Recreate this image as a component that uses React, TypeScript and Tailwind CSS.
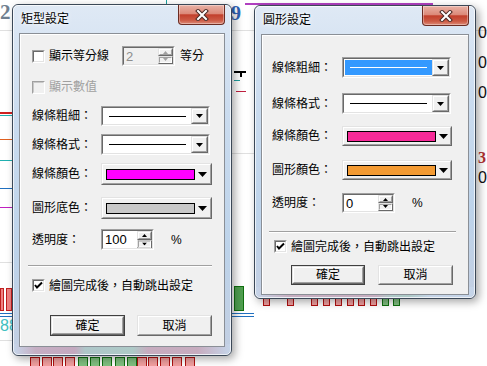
import React from "react";

const FONT = "font-['Liberation_Sans','Noto_Sans_CJK_TC',sans-serif]";

function Sunken({ className = "", inner = "", children }: { className?: string; inner?: string; children?: React.ReactNode }) {
  return (
    <div className={`border border-t-[#a0a0a0] border-l-[#a0a0a0] border-b-white border-r-white ${className}`}>
      <div className={`h-full w-full border border-t-[#696969] border-l-[#696969] border-b-[#e3e3e3] border-r-[#e3e3e3] ${inner}`}>{children}</div>
    </div>
  );
}

function Raised({ className = "", inner = "", children }: { className?: string; inner?: string; children?: React.ReactNode }) {
  return (
    <div className={`border border-t-[#e3e3e3] border-l-[#e3e3e3] border-b-[#696969] border-r-[#696969] ${className}`}>
      <div className={`h-full w-full border border-t-white border-l-white border-b-[#a0a0a0] border-r-[#a0a0a0] bg-[#f0f0f0] ${inner}`}>{children}</div>
    </div>
  );
}

function Tri({ w = 7, h = 4 }: { w?: number; h?: number }) {
  return (
    <svg width={w} height={h} viewBox={`0 0 ${w} ${h}`}>
      <polygon points={`0,0 ${w},0 ${w / 2},${h}`} fill="#000" />
    </svg>
  );
}

function TriUp({ w = 5, h = 3, color = "#000" }: { w?: number; h?: number; color?: string }) {
  return (
    <svg width={w} height={h} viewBox={`0 0 ${w} ${h}`}>
      <polygon points={`0,${h} ${w},${h} ${w / 2},0`} fill={color} />
    </svg>
  );
}

function Checkbox({ checked = false, disabled = false }: { checked?: boolean; disabled?: boolean }) {
  return (
    <div className="w-[13px] h-[13px] shrink-0 border border-t-[#a0a0a0] border-l-[#a0a0a0] border-b-white border-r-white">
      <div
        className={`w-full h-full border ${
          disabled
            ? "border-t-[#c8c8c8] border-l-[#c8c8c8] border-b-[#f0f0f0] border-r-[#f0f0f0] bg-[#f0f0f0]"
            : "border-t-[#696969] border-l-[#696969] border-b-[#e3e3e3] border-r-[#e3e3e3] bg-white"
        } flex items-center justify-center`}
      >
        {checked && (
          <svg width="9" height="9" viewBox="0 0 9 9">
            <polyline points="1,4 3,6.5 8,1.5" fill="none" stroke="#000" strokeWidth="2" />
          </svg>
        )}
      </div>
    </div>
  );
}

function Spin({ value, disabled = false, w = 53, h = 21 }: { value: string; disabled?: boolean; w?: number; h?: number }) {
  return (
    <Sunken className={`shrink-0`} inner={`flex ${disabled ? "bg-[#f0f0f0]" : "bg-white"}`}>
      <div style={{ width: w - 4, height: h - 4 }} className="flex">
        <div className={`flex-1 pl-[2px] leading-[17px] text-[13px] ${disabled ? "text-[#8d8d8d]" : "text-black"} font-['Liberation_Sans',sans-serif]`}>{value}</div>
        <div className="w-[15px] flex flex-col">
          <Raised className="flex-1" inner="flex items-center justify-center">
            <TriUp color={disabled ? "#a0a0a0" : "#000"} />
          </Raised>
          <Raised className="flex-1" inner="flex items-center justify-center rotate-180">
            <TriUp color={disabled ? "#a0a0a0" : "#000"} />
          </Raised>
        </div>
      </div>
    </Sunken>
  );
}

function LineCombo({ selected = false, w = 109, h = 20 }: { selected?: boolean; w?: number; h?: number }) {
  return (
    <Sunken inner="flex bg-white">
      <div style={{ width: w - 4, height: h - 4 }} className="flex">
        <div className={`flex-1 flex items-center ${selected ? "bg-[#3399ff]" : ""} px-[5px] my-[1px] ml-[1px]`}>
          <div className={`h-[1px] w-full ${selected ? "bg-white" : "bg-black"}`} />
        </div>
        <Raised className="w-[17px]" inner="flex items-center justify-center">
          <Tri />
        </Raised>
      </div>
    </Sunken>
  );
}

function ColorCombo({ color, w = 111, h = 22 }: { color: string; w?: number; h?: number }) {
  return (
    <Raised>
      <div style={{ width: w - 4, height: h - 4 }} className="flex items-center">
        <div className="ml-[3px] h-[11px] w-[89px] border border-black" style={{ background: color }} />
        <div className="ml-[3px]">
          <Tri w={9} h={5} />
        </div>
      </div>
    </Raised>
  );
}

function Button({ label, def = false, w = 75, h = 21 }: { label: string; def?: boolean; w?: number; h?: number }) {
  return (
    <div className={`${def ? "border border-[#404040]" : ""}`}>
      <Raised>
        <div style={{ width: w - (def ? 6 : 4), height: h - (def ? 6 : 4) }} className="flex items-center justify-center text-[12px] leading-none">
          {label}
        </div>
      </Raised>
    </div>
  );
}

function CloseBtn() {
  return (
    <div className="absolute right-[6px] top-0 w-[47px] h-[20px] rounded-b-[4px] border border-t-0 border-[#6b2c22] bg-[linear-gradient(180deg,#e9b2a6_0%,#dc8a79_45%,#c2402c_52%,#cc5a44_80%,#dc8b78_100%)] flex items-center justify-center shadow-[inset_0_0_0_1px_rgba(255,255,255,0.35)]">
      <svg width="14" height="12" viewBox="0 0 14 12">
        <path d="M3 2 L11 10 M11 2 L3 10" stroke="#4a2a25" strokeWidth="4" strokeLinecap="square" />
        <path d="M3 2 L11 10 M11 2 L3 10" stroke="#fff" strokeWidth="2" strokeLinecap="square" />
      </svg>
    </div>
  );
}

function Frame({
  title,
  w,
  h,
  children,
  clientH,
  bottomTint,
}: {
  title: string;
  w: number;
  h: number;
  clientH: number;
  children: React.ReactNode;
  bottomTint?: string;
}) {
  return (
    <div
      style={{ width: w, height: h }}
      className="relative flex flex-col rounded-[6px] border border-[#3b4857] bg-[linear-gradient(180deg,#dfe9f5_0%,#cbdcef_30%,#bdd3ea_70%,#c3cfe2_100%)] shadow-[3px_3px_8px_rgba(0,0,0,0.35)]"
    >
      {bottomTint && (
        <div className="absolute left-[1px] right-[1px] bottom-[1px] h-[10px] rounded-b-[5px] opacity-80" style={{ background: bottomTint }} />
      )}
      <div className="absolute inset-0 rounded-[5px] border border-white/70 pointer-events-none" />
      <div className="h-[28px] shrink-0 pl-[8px] flex items-center text-[12px] text-black [text-shadow:0_0_6px_#fff,0_0_3px_#fff]">{title}</div>
      <div style={{ height: clientH }} className="relative mx-[6px] border border-[#8a8f96] bg-[#f0f0f0] shadow-[inset_1px_1px_0_#fff]">
        {children}
      </div>
      <CloseBtn />
    </div>
  );
}

function Bar({ x, w, c, h = 12 }: { x: number; w: number; c: string; h?: number }) {
  return (
    <div
      style={{ left: x, width: w, height: h }}
      className={`absolute top-0 border ${c === "r" ? "border-[#b01010] bg-[#f2a0a0]" : "border-[#107010] bg-[#80c080]"}`}
    />
  );
}

function Background() {
  const bottomBars: [number, string][] = [
    [30, "r"], [42, "r"], [53, "r"], [65, "r"],
    [78, "g"], [90, "g"], [102, "g"], [115, "g"], [127, "g"],
    [137, "r"], [148, "r"], [160, "r"], [172, "r"], [185, "r"],
  ];
  const rightBars: [number, string][] = [
    [263, "r"], [287, "r"], [311, "r"], [323, "r"], [335, "r"], [347, "r"], [358, "r"], [370, "r"], [382, "g"], [393, "g"],
  ];
  return (
    <div className="absolute inset-0">
      {/* grid lines */}
      <div className="absolute left-0 top-[30px] w-[487px] h-[1px] bg-[#e0e0e0]" />
      <div className="absolute left-0 top-[262px] w-[12px] h-[1px] bg-[#e0e0e0]" />
      <div className="absolute left-0 top-[340px] w-[12px] h-[1px] bg-[#e0e0e0]" />
      <div className="absolute left-[166px] top-0 w-[1px] h-[5px] bg-[#1aa0a0]" />
      <div className="absolute left-[245px] top-[3px] w-[188px] h-[2px] bg-[#b040c0]" />
      {/* top numbers */}
      <div className="absolute left-0 top-[2px] text-[21px] font-bold text-[#6f7f90] font-['Liberation_Serif',serif] leading-none">2</div>
      <div className="absolute left-[231px] top-[3px] text-[20px] font-bold text-[#2f63b5] font-['Liberation_Serif',serif] leading-none">9</div>
      {/* left strip marks */}
      <div className="absolute left-0 top-[112px] w-[12px] h-[2px] bg-[#d02020]" />
      <div className="absolute left-0 top-[115px] w-[12px] h-[1px] bg-[#20b0b0]" />
      <div className="absolute left-0 top-[139px] w-[12px] h-[1px] bg-[#e06020]" />
      <div className="absolute left-0 top-[160px] w-[12px] h-[1px] bg-[#20b0b0]" />
      <div className="absolute left-0 top-[188px] w-[12px] h-[1px] bg-[#2070c0]" />
      <div className="absolute left-0 top-[207px] w-[12px] h-[1px] bg-[#c020c0]" />
      <div className="absolute left-0 top-[288px] w-[4px] h-[23px] border border-[#c02020] bg-[#f08080]" />
      <div className="absolute left-[6px] top-[288px] w-[6px] h-[23px] border border-[#c02020] bg-[#f08080]" />
      <div className="absolute left-0 top-[313px] w-[254px] h-[1px] bg-[#2070c0]" />
      <div className="absolute left-0 top-[316px] w-[254px] h-[1px] bg-[#2070c0]" />
      <div className="absolute left-0 top-[318px] text-[16px] text-[#40c0c0] font-['Liberation_Sans',sans-serif] leading-none">88</div>
      {/* between dialogs */}
      <div className="absolute left-[234px] top-[286px] w-[10px] h-[25px] border border-[#107010] bg-[#50a050]" />
      <div className="absolute left-[234px] top-[71px] w-[12px] h-[2px] bg-[#000]" />
      <div className="absolute left-[240px] top-[71px] w-[2px] h-[6px] bg-[#000]" />
      <div className="absolute left-[234px] top-[80px] w-[6px] h-[1px] bg-[#20a0a0]" />
      <div className="absolute left-[236px] top-[91px] w-[10px] h-[1px] bg-[#c02040]" />
      <div className="absolute left-[232px] top-[153px] w-[22px] h-[1px] bg-[#e0e0e0]" />
      {/* right edge numbers */}
      <div className="absolute left-[478px] top-[25px] flex flex-col gap-[14px] text-[16px] text-[#111] font-['Liberation_Sans',sans-serif] leading-none">
        <span>0</span>
        <span>0</span>
        <span>0</span>
      </div>
      <div className="absolute left-[478px] top-[150px] text-[16px] text-[#b03030] font-bold font-['Liberation_Serif',serif] leading-none">3</div>
      <div className="absolute left-[478px] top-[170px] text-[16px] text-[#111] font-['Liberation_Sans',sans-serif] leading-none">0</div>
      {/* bottom bars */}
      <div className="absolute left-0 top-[357px] w-[487px] h-[12px]">
        {bottomBars.map(([x, c], i) => (
          <Bar key={i} x={x} w={10} c={c} />
        ))}
      </div>
      <div className="absolute left-0 top-[297px] w-[487px] h-[9px]">
        {rightBars.map(([x, c], i) => (
          <Bar key={i} x={x} w={7} c={c} h={9} />
        ))}
      </div>
    </div>
  );
}

function Label({ text, w = 69, gray = false }: { text: string; w?: number; gray?: boolean }) {
  return (
    <div style={{ width: w }} className={`shrink-0 text-[12px] leading-none ${gray ? "text-[#a0a0a0]" : ""}`}>
      {text}
    </div>
  );
}

function Separator({ ml, w }: { ml: number; w: number }) {
  return (
    <div style={{ marginLeft: ml, width: w }} className="h-[2px] border-t border-t-[#a0a0a0] border-b border-b-white" />
  );
}

function LeftDialog() {
  return (
    <Frame
      title="矩型設定"
      w={220}
      h={352}
      clientH={314}
      bottomTint="linear-gradient(90deg,#c6d6ea 0%,#c6a6bb 10%,#c49fb6 28%,#a9c4c2 33%,#a8c8c0 55%,#c8a3b6 62%,#c8a3b6 85%,#c6d6ea 100%)"
    >
      <div className="flex flex-col pl-[12px]">
        <div className="mt-[12px] h-[20px] flex items-center">
          <Checkbox />
          <div className="ml-[4px] w-[73px] text-[12px] leading-none">顯示等分線</div>
          <Spin value="2" disabled h={20} />
          <div className="ml-[5px] text-[12px] leading-none">等分</div>
        </div>
        <div className="mt-[11px] h-[20px] flex items-center">
          <Checkbox disabled />
          <div className="ml-[4px] text-[12px] leading-none text-[#a0a0a0]">顯示數值</div>
        </div>
        <div className="mt-[9px] flex items-center">
          <Label text="線條粗細：" />
          <LineCombo />
        </div>
        <div className="mt-[8px] flex items-center">
          <Label text="線條格式：" />
          <LineCombo h={21} />
        </div>
        <div className="mt-[8px] flex items-center">
          <Label text="線條顏色：" />
          <ColorCombo color="#ff00ff" />
        </div>
        <div className="mt-[12px] flex items-center">
          <Label text="圖形底色：" />
          <ColorCombo color="#c8c8c8" />
        </div>
        <div className="mt-[10px] flex items-center">
          <Label text="透明度：" />
          <Spin value="100" />
          <div className="ml-[17px] text-[12px] leading-none font-['Liberation_Sans',sans-serif]">%</div>
        </div>
        <div className="mt-[15px]">
          <Separator ml={-4} w={184} />
        </div>
        <div className="mt-[12px] h-[13px] flex items-center">
          <Checkbox checked />
          <div className="ml-[4px] text-[12px] leading-none">繪圖完成後，自動跳出設定</div>
        </div>
        <div className="mt-[23px] flex gap-[12px] ml-[18px]">
          <Button label="確定" def />
          <Button label="取消" />
        </div>
      </div>
    </Frame>
  );
}

function RightDialog() {
  return (
    <Frame
      title="圓形設定"
      w={222}
      h={294}
      clientH={261}
      bottomTint="linear-gradient(90deg,#c6d6ea 0%,#c8a6b8 15%,#c8a6b8 55%,#a8c8c0 62%,#a8c8c0 70%,#c6d6ea 80%)"
    >
      <div className="flex flex-col pl-[10px]">
        <div className="mt-[22px] flex items-center">
          <Label text="線條粗細：" w={70} />
          <LineCombo selected h={21} />
        </div>
        <div className="mt-[15px] flex items-center">
          <Label text="線條格式：" w={70} />
          <LineCombo h={21} />
        </div>
        <div className="mt-[12px] flex items-center">
          <Label text="線條顏色：" w={70} />
          <ColorCombo color="#f72a98" w={110} h={20} />
        </div>
        <div className="mt-[14px] flex items-center">
          <Label text="圖形顏色：" w={70} />
          <ColorCombo color="#f39a32" w={110} h={20} />
        </div>
        <div className="mt-[13px] flex items-center">
          <Label text="透明度：" w={70} />
          <Spin value="0" h={20} />
          <div className="ml-[17px] text-[12px] leading-none font-['Liberation_Sans',sans-serif]">%</div>
        </div>
        <div className="mt-[18px]">
          <Separator ml={-3} w={187} />
        </div>
        <div className="mt-[7px] h-[13px] flex items-center ml-[2px]">
          <Checkbox checked />
          <div className="ml-[4px] text-[12px] leading-none">繪圖完成後，自動跳出設定</div>
        </div>
        <div className="mt-[12px] flex gap-[13px] ml-[19px]">
          <Button label="確定" def w={74} h={20} />
          <Button label="取消" h={20} />
        </div>
      </div>
    </Frame>
  );
}

export default function App() {
  return (
    <div className={`relative w-[487px] h-[366px] overflow-hidden bg-white text-black ${FONT}`}>
      <Background />
      <div className="absolute left-[12px] top-[4px]">
        <LeftDialog />
      </div>
      <div className="absolute left-[254px] top-[5px]">
        <RightDialog />
      </div>
    </div>
  );
}
